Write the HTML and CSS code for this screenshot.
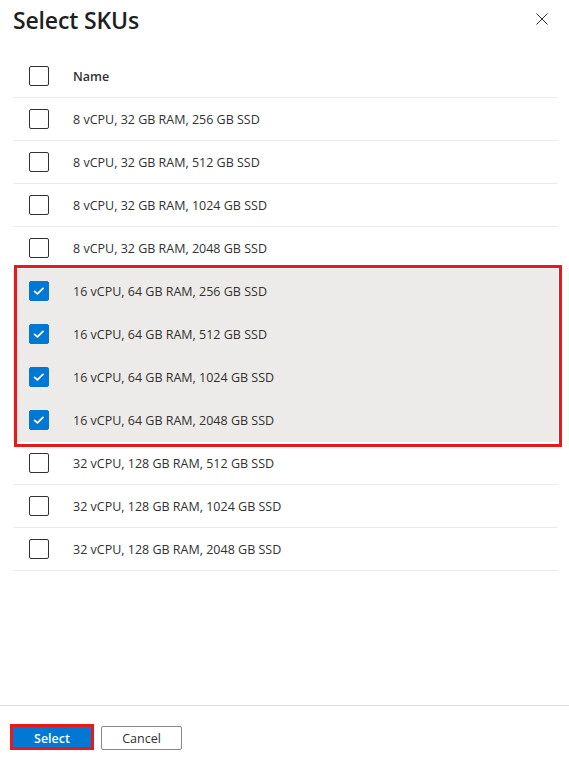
FILE: index.html
```html
<!DOCTYPE html>
<html lang="en">
<head>
<meta charset="utf-8">
<title>Select SKUs</title>
<link rel="stylesheet" href="styles.css">
</head>
<body>
<div class="panel">
  <div class="header">
    <h1 class="title">Select SKUs</h1>
    <button class="close" aria-label="Close">
      <svg width="12" height="12" viewBox="0 0 12 12"><path d="M0.5 0.5 L11.5 11.5 M11.5 0.5 L0.5 11.5" stroke="#323130" stroke-width="1" fill="none"/></svg>
    </button>
  </div>
  <div class="table">
    <div class="row head-row">
      <span class="check"></span>
      <span class="label head">Name</span>
    </div>
    <div class="row"><span class="check"></span><span class="label">8 vCPU, 32 GB RAM, 256 GB SSD</span></div>
    <div class="row"><span class="check"></span><span class="label">8 vCPU, 32 GB RAM, 512 GB SSD</span></div>
    <div class="row"><span class="check"></span><span class="label">8 vCPU, 32 GB RAM, 1024 GB SSD</span></div>
    <div class="row"><span class="check"></span><span class="label">8 vCPU, 32 GB RAM, 2048 GB SSD</span></div>
    <div class="group">
      <div class="row selected"><span class="check on"><svg width="20" height="20" viewBox="0 0 20 20"><path d="M5.6 10.4 L8.4 12.9 L14 7.4" stroke="#fff" stroke-width="1.8" fill="none" stroke-linecap="round" stroke-linejoin="round"/></svg></span><span class="label">16 vCPU, 64 GB RAM, 256 GB SSD</span></div>
      <div class="row selected"><span class="check on"><svg width="20" height="20" viewBox="0 0 20 20"><path d="M5.6 10.4 L8.4 12.9 L14 7.4" stroke="#fff" stroke-width="1.8" fill="none" stroke-linecap="round" stroke-linejoin="round"/></svg></span><span class="label">16 vCPU, 64 GB RAM, 512 GB SSD</span></div>
      <div class="row selected"><span class="check on"><svg width="20" height="20" viewBox="0 0 20 20"><path d="M5.6 10.4 L8.4 12.9 L14 7.4" stroke="#fff" stroke-width="1.8" fill="none" stroke-linecap="round" stroke-linejoin="round"/></svg></span><span class="label">16 vCPU, 64 GB RAM, 1024 GB SSD</span></div>
      <div class="row selected"><span class="check on"><svg width="20" height="20" viewBox="0 0 20 20"><path d="M5.6 10.4 L8.4 12.9 L14 7.4" stroke="#fff" stroke-width="1.8" fill="none" stroke-linecap="round" stroke-linejoin="round"/></svg></span><span class="label">16 vCPU, 64 GB RAM, 2048 GB SSD</span></div>
    </div>
    <div class="row"><span class="check"></span><span class="label">32 vCPU, 128 GB RAM, 512 GB SSD</span></div>
    <div class="row"><span class="check"></span><span class="label">32 vCPU, 128 GB RAM, 1024 GB SSD</span></div>
    <div class="row"><span class="check"></span><span class="label">32 vCPU, 128 GB RAM, 2048 GB SSD</span></div>
  </div>
  <div class="footer">
    <button class="btn primary">Select</button>
    <button class="btn secondary">Cancel</button>
  </div>
</div>
</body>
</html>
```
FILE: styles.css
```css
html, body {
  margin: 0;
  padding: 0;
  background: #ffffff;
}
body {
  font-family: "Open Sans", "Noto Sans", "Liberation Sans", sans-serif;
  color: #323130;
}
.panel {
  height: 760px;
  display: flex;
  flex-direction: column;
}
.header {
  height: 55px;
  box-sizing: border-box;
  padding: 4px 21px 0 13px;
  display: flex;
  justify-content: space-between;
  align-items: flex-start;
}
.title {
  margin: 0;
  font-size: 23px;
  line-height: 32px;
  font-weight: 600;
  letter-spacing: -0.15px;
  color: #201f1e;
}
.close {
  margin-top: 9px;
  padding: 0;
  border: 0;
  background: none;
  width: 12px;
  height: 12px;
  display: flex;
}
.table {
  margin: 0 11px 0 13px;
}
.row {
  height: 42px;
  display: flex;
  align-items: center;
  border-bottom: 1px solid #edebe9;
  padding-left: 16px;
}
.check {
  width: 20px;
  height: 20px;
  box-sizing: border-box;
  border: 1px solid #323130;
  border-radius: 2px;
  margin-right: 24px;
  flex: none;
  display: flex;
}
.check.on {
  background: #0078d4;
  border-color: #0078d4;
}
.check.on svg {
  margin: -1px;
}
.label {
  font-size: 12.5px;
  letter-spacing: 0;
  white-space: nowrap;
}
.label.head {
  font-weight: 600;
}
.group {
  position: relative;
}
.group::after {
  content: "";
  position: absolute;
  left: 1px;
  top: -5px;
  right: -4px;
  bottom: -5px;
  border: 3px solid #e8191c;
  pointer-events: none;
}
.row.selected {
  background: #edebe9;
}
.footer {
  margin-top: auto;
  border-top: 1px solid #e1dfdd;
  height: 55px;
  box-sizing: border-box;
  padding: 20px 0 0 13px;
  display: flex;
  align-items: flex-start;
}
.btn {
  font-family: inherit;
  font-size: 12.5px;
  padding: 0;
  border-radius: 2px;
  box-sizing: border-box;
}
.btn.primary {
  width: 78px;
  height: 20px;
  margin-right: 10px;
  background: #0078d4;
  border: 0;
  color: #ffffff;
  font-weight: 600;
  outline: 3px solid #e8191c;
  border-radius: 0;
  line-height: 16px;
  padding-top: 3px;
  margin-top: 1px;
}
.btn.secondary {
  width: 81px;
  height: 24px;
  background: #ffffff;
  border: 1px solid #8a8886;
  color: #323130;
  line-height: 20px;
  padding-top: 1px;
}
```
